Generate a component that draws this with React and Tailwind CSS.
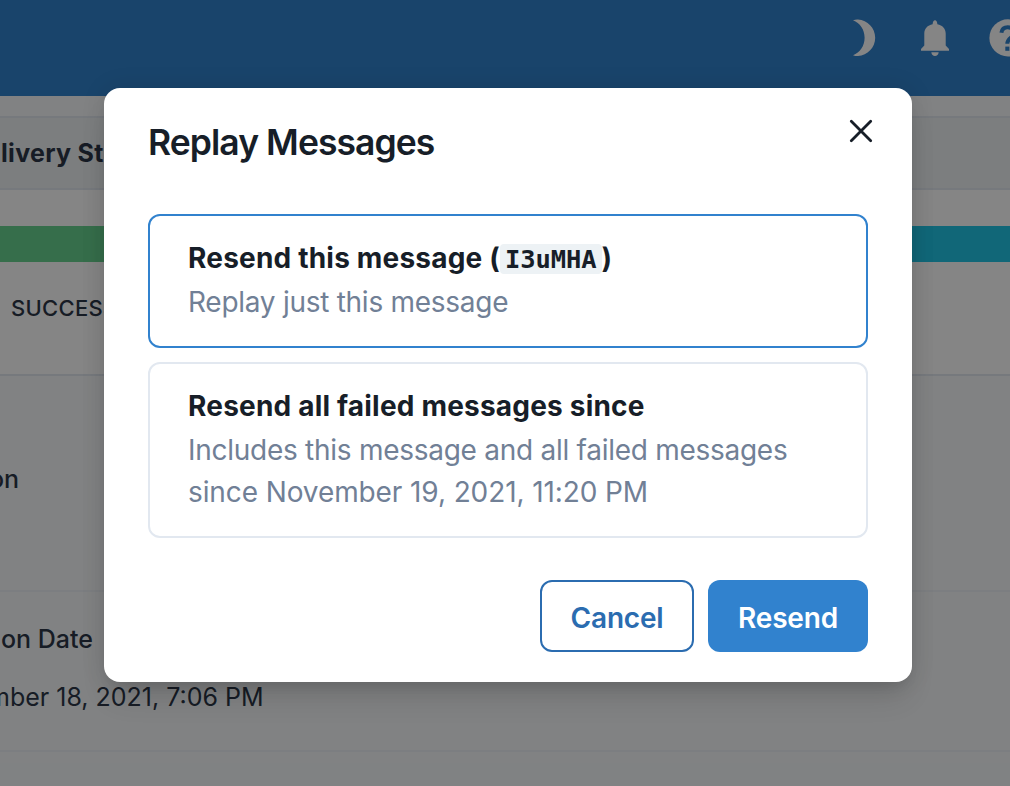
function MoonIcon() {
  return (
    <svg className="h-[38px] w-[24px] shrink-0" viewBox="0 0 24 38" fill="#fff">
      <path d="M1 1.200C3 .5 4.500 .4 6 .5C15.500 1 23.200 9 23.200 18.700S15.500 36.500 6 37C4.500 37.100 3 36.900 1 36.200C8 33.400 12.600 27 12.600 18.700S8 4 1 1.200Z" />
    </svg>
  );
}

function BellIcon() {
  return (
    <svg className="h-[38px] w-[30px] shrink-0" viewBox="0 0 30 38" fill="#fff">
      <path d="M15 1.200C16.300 1.200 17.200 2.500 17.400 5.200C22.500 6.200 25.700 9.500 25.700 14.500V26.500L29 30V31.700H1V30L4.300 26.500V14.500C4.300 9.500 7.500 6.200 12.600 5.200C12.800 2.500 13.700 1.200 15 1.200ZM11.300 33.300H18.700C18.300 35.800 17 37 15 37S11.700 35.800 11.300 33.300Z" />
    </svg>
  );
}

function HelpIcon() {
  return (
    <svg className="h-[38px] w-[38px] shrink-0" viewBox="0 0 38 38">
      <circle cx="19" cy="18.900" r="18.600" fill="#fff" />
      <path d="M12.400 13.700C12.900 10.400 15.200 8.300 18.700 8.300S25 10.600 25 13.800C25 18.600 18.300 18.500 18.300 24.800" fill="none" stroke="#3182ce" strokeWidth="4" />
      <path d="M16.300 27.600H20.400V31.800H16.300Z" fill="#3182ce" />
    </svg>
  );
}

function Option({ selected, title, children }) {
  return (
    <button
      className={
        selected
          ? "flex h-[134px] w-full flex-col rounded-[12px] border-2 border-[#3182ce] px-[38px] pt-[21px] text-left"
          : "flex h-[176px] w-full flex-col rounded-[12px] border-2 border-[#e2e8f0] px-[38px] pt-[21px] text-left"
      }
    >
      <span className="flex h-[42px] items-center whitespace-nowrap text-[28px] font-bold leading-[42px] tracking-[0.2px]">{title}</span>
      <span className="mt-[2px] whitespace-nowrap text-[28px] leading-[42px] tracking-[-0.27px] text-[#718096]">{children}</span>
    </button>
  );
}

export default function App() {
  return (
    <div className="relative h-[786px] w-[1010px] overflow-hidden bg-[#f7fafc] font-['Inter',sans-serif] text-[#171e28]">
      <header className="flex h-[96px] items-start bg-[#3182ce] pl-[852px] pt-[19px]">
        <MoonIcon />
        <span className="w-[44px] shrink-0" />
        <BellIcon />
        <span className="w-[39px] shrink-0" />
        <HelpIcon />
      </header>

      <main className="flex flex-col pt-[20px] text-[#2d3748]">
        <div className="flex h-[74px] items-center border-y-2 border-[#e2e8f0] bg-[#edf2f4] pl-[1px] pt-[2px] text-[25px] font-bold tracking-[0.3px]">
          livery Stats
        </div>
        <section className="flex h-[186px] flex-col border-b-2 border-[#e2e8f0] bg-white pt-[36px]">
          <div className="flex h-[36px]">
            <div className="w-[508px] bg-[#68d391]" />
            <div className="flex-1 bg-[#22c5e7]" />
          </div>
          <span className="mt-[28px] pl-[11px] text-[22px] font-medium leading-[36px] tracking-[0.3px]">SUCCESS</span>
        </section>
        <section className="flex h-[216px] items-center border-b-2 border-[#edf2f7] pb-[7px]">
          <span className="-ml-[11px] text-[25px] font-medium">on</span>
        </section>
        <section className="flex h-[160px] flex-col border-b-2 border-[#edf2f7] pt-[27px]">
          <span className="pl-[1px] text-[25px] font-medium leading-[40px]">on Date</span>
          <span className="-ml-[12px] mt-[18px] whitespace-nowrap text-[25px] leading-[40px]">mber 18, 2021, 7:06 PM</span>
        </section>
      </main>

      <div className="absolute inset-0 bg-black/48" />

      <div className="absolute inset-0 flex items-start pl-[104px] pt-[88px]">
        <div role="dialog" className="flex h-[594px] w-[808px] flex-col rounded-[16px] bg-white px-[44px] shadow-[0_20px_30px_-6px_rgba(0,0,0,0.12),0_8px_12px_-4px_rgba(0,0,0,0.06),0_0_24px_rgba(0,0,0,0.1)]">
          <div className="flex h-[126px] items-start justify-between">
            <h2 className="mt-[31px] text-[35.5px] font-semibold leading-[48px] tracking-[-0.95px]">Replay Messages</h2>
            <button aria-label="Close" className="-mr-[5px] mt-[31px]">
              <svg className="h-[24px] w-[24px]" viewBox="0 0 24 24" fill="none" stroke="#171e28" strokeWidth="2.800" strokeLinecap="round">
                <path d="M2.300 2.300L21.700 21.700M21.700 2.300L2.300 21.700" />
              </svg>
            </button>
          </div>

          <div className="flex flex-col gap-[14px]">
            <Option
              selected
              title={
                <>
                  Resend this message (
                  <code className="mt-[2px] flex h-[30px] items-center rounded-[4px] bg-[#edf2f5] px-[5px] font-['DejaVu_Sans_Mono',monospace] text-[25.5px] font-bold tracking-[-0.1px]">I3uMHA</code>
                  )
                </>
              }
            >
              Replay just this message
            </Option>
            <Option title="Resend all failed messages since">
              Includes this message and all failed messages
              <br />
              <span className="tracking-[-0.1px]">since November 19, 2021, 11:20 PM</span>
            </Option>
          </div>

          <footer className="mt-[42px] flex justify-end gap-[14px] text-[28px] font-semibold tracking-[-0.2px]">
            <button className="flex h-[72px] w-[154px] items-center justify-center rounded-[12px] border-2 border-[#2b6cb0] pt-[4px] text-[#2b6cb0]">Cancel</button>
            <button className="flex h-[72px] w-[160px] items-center justify-center rounded-[12px] bg-[#3182ce] pt-[4px] text-white">Resend</button>
          </footer>
        </div>
      </div>
    </div>
  );
}
